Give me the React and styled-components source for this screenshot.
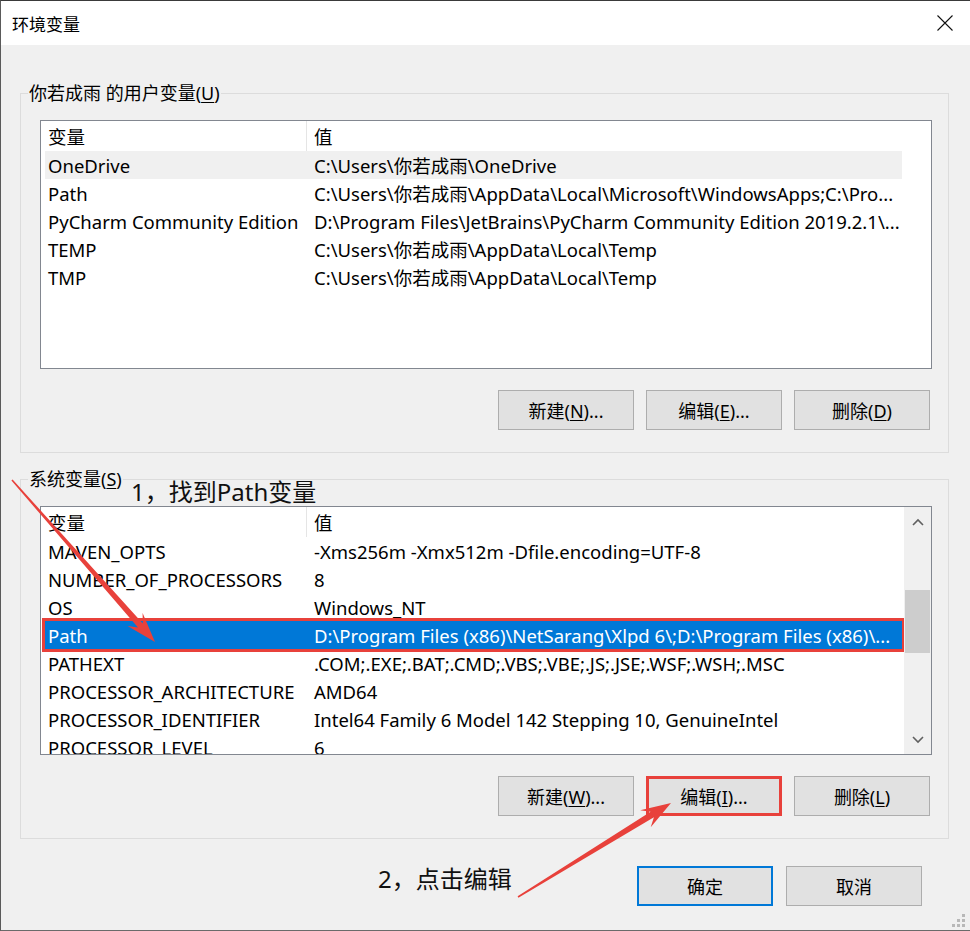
import React from 'react';
import styled, { createGlobalStyle, css } from 'styled-components';

const GlobalStyle = createGlobalStyle`
  html, body {
    margin: 0;
    padding: 0;
    background: #f0f0f0;
  }
`;

const userVars = [
  ['OneDrive', 'C:\\Users\\你若成雨\\OneDrive', 'hover'],
  ['Path', 'C:\\Users\\你若成雨\\AppData\\Local\\Microsoft\\WindowsApps;C:\\Pro...'],
  ['PyCharm Community Edition', 'D:\\Program Files\\JetBrains\\PyCharm Community Edition 2019.2.1\\...'],
  ['TEMP', 'C:\\Users\\你若成雨\\AppData\\Local\\Temp'],
  ['TMP', 'C:\\Users\\你若成雨\\AppData\\Local\\Temp'],
];

const sysVars = [
  ['MAVEN_OPTS', '-Xms256m -Xmx512m -Dfile.encoding=UTF-8'],
  ['NUMBER_OF_PROCESSORS', '8'],
  ['OS', 'Windows_NT'],
  ['Path', 'D:\\Program Files (x86)\\NetSarang\\Xlpd 6\\;D:\\Program Files (x86)\\...', 'selected'],
  ['PATHEXT', '.COM;.EXE;.BAT;.CMD;.VBS;.VBE;.JS;.JSE;.WSF;.WSH;.MSC'],
  ['PROCESSOR_ARCHITECTURE', 'AMD64'],
  ['PROCESSOR_IDENTIFIER', 'Intel64 Family 6 Model 142 Stepping 10, GenuineIntel'],
  ['PROCESSOR_LEVEL', '6'],
];

// tapered arrow polygon from tail to tip
function arrowPoints(tx, ty, hx, hy) {
  const len = Math.hypot(hx - tx, hy - ty);
  const dx = (hx - tx) / len;
  const dy = (hy - ty) / len;
  const nx = -dy;
  const ny = dx;
  const headLen = 30;
  const headW = 10;
  const shaftEnd = 22;
  const bx = hx - dx * headLen;
  const by = hy - dy * headLen;
  const sx = hx - dx * shaftEnd;
  const sy = hy - dy * shaftEnd;
  const pts = [
    [tx + nx * 0.8, ty + ny * 0.8],
    [sx + nx * 3.2, sy + ny * 3.2],
    [bx + nx * headW, by + ny * headW],
    [hx, hy],
    [bx - nx * headW, by - ny * headW],
    [sx - nx * 3.2, sy - ny * 3.2],
    [tx - nx * 0.8, ty - ny * 0.8],
  ];
  return pts.map(p => p.map(v => v.toFixed(1)).join(',')).join(' ');
}

function VarList({ rows, scroll }) {
  return (
    <List>
      <ListBody>
        <Row $head>
          <Cell $head>变量</Cell>
          <Cell $value>值</Cell>
        </Row>
        {rows.map(([name, value, state]) => (
          <Row key={name + value} $state={state}>
            <Cell>{name}</Cell>
            <Cell $value>{value}</Cell>
          </Row>
        ))}
      </ListBody>
      {scroll && (
        <ScrollBar>
          <ScrollButton>
            <svg width="12" height="8" viewBox="0 0 12 8">
              <path d="M1 7 L6 2 L11 7" fill="none" stroke="#606060" strokeWidth="1.6" />
            </svg>
          </ScrollButton>
          <Track>
            <Thumb $offset={54} $size={63} />
          </Track>
          <ScrollButton>
            <svg width="12" height="8" viewBox="0 0 12 8">
              <path d="M1 1 L6 6 L11 1" fill="none" stroke="#606060" strokeWidth="1.6" />
            </svg>
          </ScrollButton>
        </ScrollBar>
      )}
    </List>
  );
}

export default function App() {
  return (
    <>
      <GlobalStyle />
      <Window>
        <TitleBar>
          <Title>环境变量</Title>
          <svg width="16" height="16" viewBox="0 0 16 16">
            <path d="M0.5 0.5 L15.5 15.5 M15.5 0.5 L0.5 15.5" stroke="#111" strokeWidth="1.1" />
          </svg>
        </TitleBar>
        <Content>
          <GroupBox $gap={14}>
            <Legend>你若成雨 的用户变量(<u>U</u>)</Legend>
            <VarList rows={userVars} />
            <ButtonRow>
              <Button>新建(<u>N</u>)...</Button>
              <Button>编辑(<u>E</u>)...</Button>
              <Button>删除(<u>D</u>)</Button>
            </ButtonRow>
          </GroupBox>
          <GroupBox>
            <Legend>系统变量(<u>S</u>)</Legend>
            <VarList rows={sysVars} scroll />
            <ButtonRow>
              <Button>新建(<u>W</u>)...</Button>
              <Button $marked>编辑(<u>I</u>)...</Button>
              <Button>删除(<u>L</u>)</Button>
            </ButtonRow>
          </GroupBox>
          <FooterRow>
            <Button $primary>确定</Button>
            <Button>取消</Button>
          </FooterRow>
        </Content>

        <Note $x={130} $y={477}>1，找到Path变量</Note>
        <Note $x={377} $y={864}>2，点击编辑</Note>

        <Overlay width="970" height="931" viewBox="0 0 970 931">
          <polygon points={arrowPoints(12, 480, 155, 642)} fill="#e8413b" />
          <polygon points={arrowPoints(518, 897, 671, 803)} fill="#e8413b" />
        </Overlay>

        <Grip width="14" height="14" viewBox="0 0 14 14">
          {[[10, 0], [10, 5], [5, 5], [10, 10], [5, 10], [0, 10]].map(([x, y]) => (
            <rect key={x + '-' + y} x={x} y={y} width="3" height="3" fill="#b8b8b8" />
          ))}
        </Grip>
      </Window>
    </>
  );
}

const Window = styled.div`
  position: relative;
  width: 970px;
  height: 931px;
  box-sizing: border-box;
  display: flex;
  flex-direction: column;
  overflow: hidden;
  background: #f0f0f0;
  border-top: 1px solid #3a3a3a;
  border-left: 1px solid #5a5a5a;
  border-bottom: 1px solid #6a6a6a;
  font-family: "Noto Sans", "Noto Sans CJK SC", sans-serif;
  color: #000;
`;

const TitleBar = styled.div`
  height: 44px;
  flex-shrink: 0;
  display: flex;
  align-items: center;
  justify-content: space-between;
  padding: 0 17px 0 11px;
  background: #fff;
`;

const Title = styled.span`
  font-size: 17px;
  font-family: "Noto Sans CJK SC", sans-serif;
`;

const Content = styled.div`
  flex: 1;
  display: flex;
  flex-direction: column;
  padding: 36px 21px 0 19px;
`;

const GroupBox = styled.fieldset`
  margin: 0 0 ${p => p.$gap || 0}px;
  padding: 0 16px 22px 19px;
  border: 1px solid #dcdcdc;
  min-width: 0;
`;

const Legend = styled.legend`
  margin-left: -12px;
  padding: 0 1px;
  font-size: 18px;
  line-height: 24px;
  u {
    text-decoration-thickness: 1px;
    text-underline-offset: 2px;
  }
`;

const List = styled.div`
  margin-top: 15px;
  height: 249px;
  box-sizing: border-box;
  display: flex;
  overflow: hidden;
  border: 1px solid #828790;
  background: #fff;
`;

const ListBody = styled.div`
  flex: 1;
  padding-left: 4px;
  overflow: hidden;
`;

const Row = styled.div`
  width: 857px;
  height: ${p => (p.$head ? 30 : 28)}px;
  display: grid;
  grid-template-columns: 262px 1fr;
  align-items: center;
  font-size: 18.5px;
  white-space: nowrap;
  box-sizing: border-box;
  ${p => p.$state === 'hover' && css`
    background: #f0f0f0;
  `}
  ${p => p.$state === 'selected' && css`
    background: #0078d7;
    color: #fff;
    outline: 3px solid #e8413b;
    outline-offset: 0;
  `}
`;

const Cell = styled.div`
  height: 100%;
  display: flex;
  align-items: center;
  overflow: hidden;
  padding-left: ${p => (p.$value ? 7 : 3)}px;
  ${p => p.$head && css`
    border-right: 1px solid #e5e5e5;
  `}
`;

const ScrollBar = styled.div`
  width: 27px;
  flex-shrink: 0;
  display: flex;
  flex-direction: column;
  background: #f0f0f0;
`;

const ScrollButton = styled.div`
  height: 29px;
  display: flex;
  align-items: center;
  justify-content: center;
`;

const Track = styled.div`
  flex: 1;
  display: flex;
  flex-direction: column;
`;

const Thumb = styled.div`
  margin: ${p => p.$offset}px 1px 0 1px;
  height: ${p => p.$size}px;
  background: #cdcdcd;
`;

const ButtonRow = styled.div`
  display: flex;
  justify-content: flex-end;
  gap: 12px;
  margin-top: 21px;
  padding-right: 2px;
`;

const FooterRow = styled.div`
  display: flex;
  justify-content: flex-end;
  gap: 13px;
  margin: 27px 27px 0 0;
`;

const Button = styled.button`
  width: 136px;
  height: 40px;
  padding: 0;
  box-sizing: border-box;
  background: #e1e1e1;
  border: 1px solid #adadad;
  font-family: "Noto Sans", "Noto Sans CJK SC", sans-serif;
  font-size: 18px;
  color: #000;
  u {
    text-decoration-thickness: 1px;
    text-underline-offset: 2px;
  }
  ${p => p.$primary && css`
    border: 2px solid #0078d7;
  `}
  ${p => p.$marked && css`
    border: 3px solid #e8413b;
  `}
`;

const Note = styled.div`
  position: absolute;
  left: ${p => p.$x}px;
  top: ${p => p.$y}px;
  font-size: 24px;
  line-height: 28px;
  color: #111;
  white-space: nowrap;
`;

const Overlay = styled.svg`
  position: absolute;
  left: -1px;
  top: -1px;
  pointer-events: none;
`;

const Grip = styled.svg`
  position: absolute;
  right: 4px;
  bottom: 2px;
`;
